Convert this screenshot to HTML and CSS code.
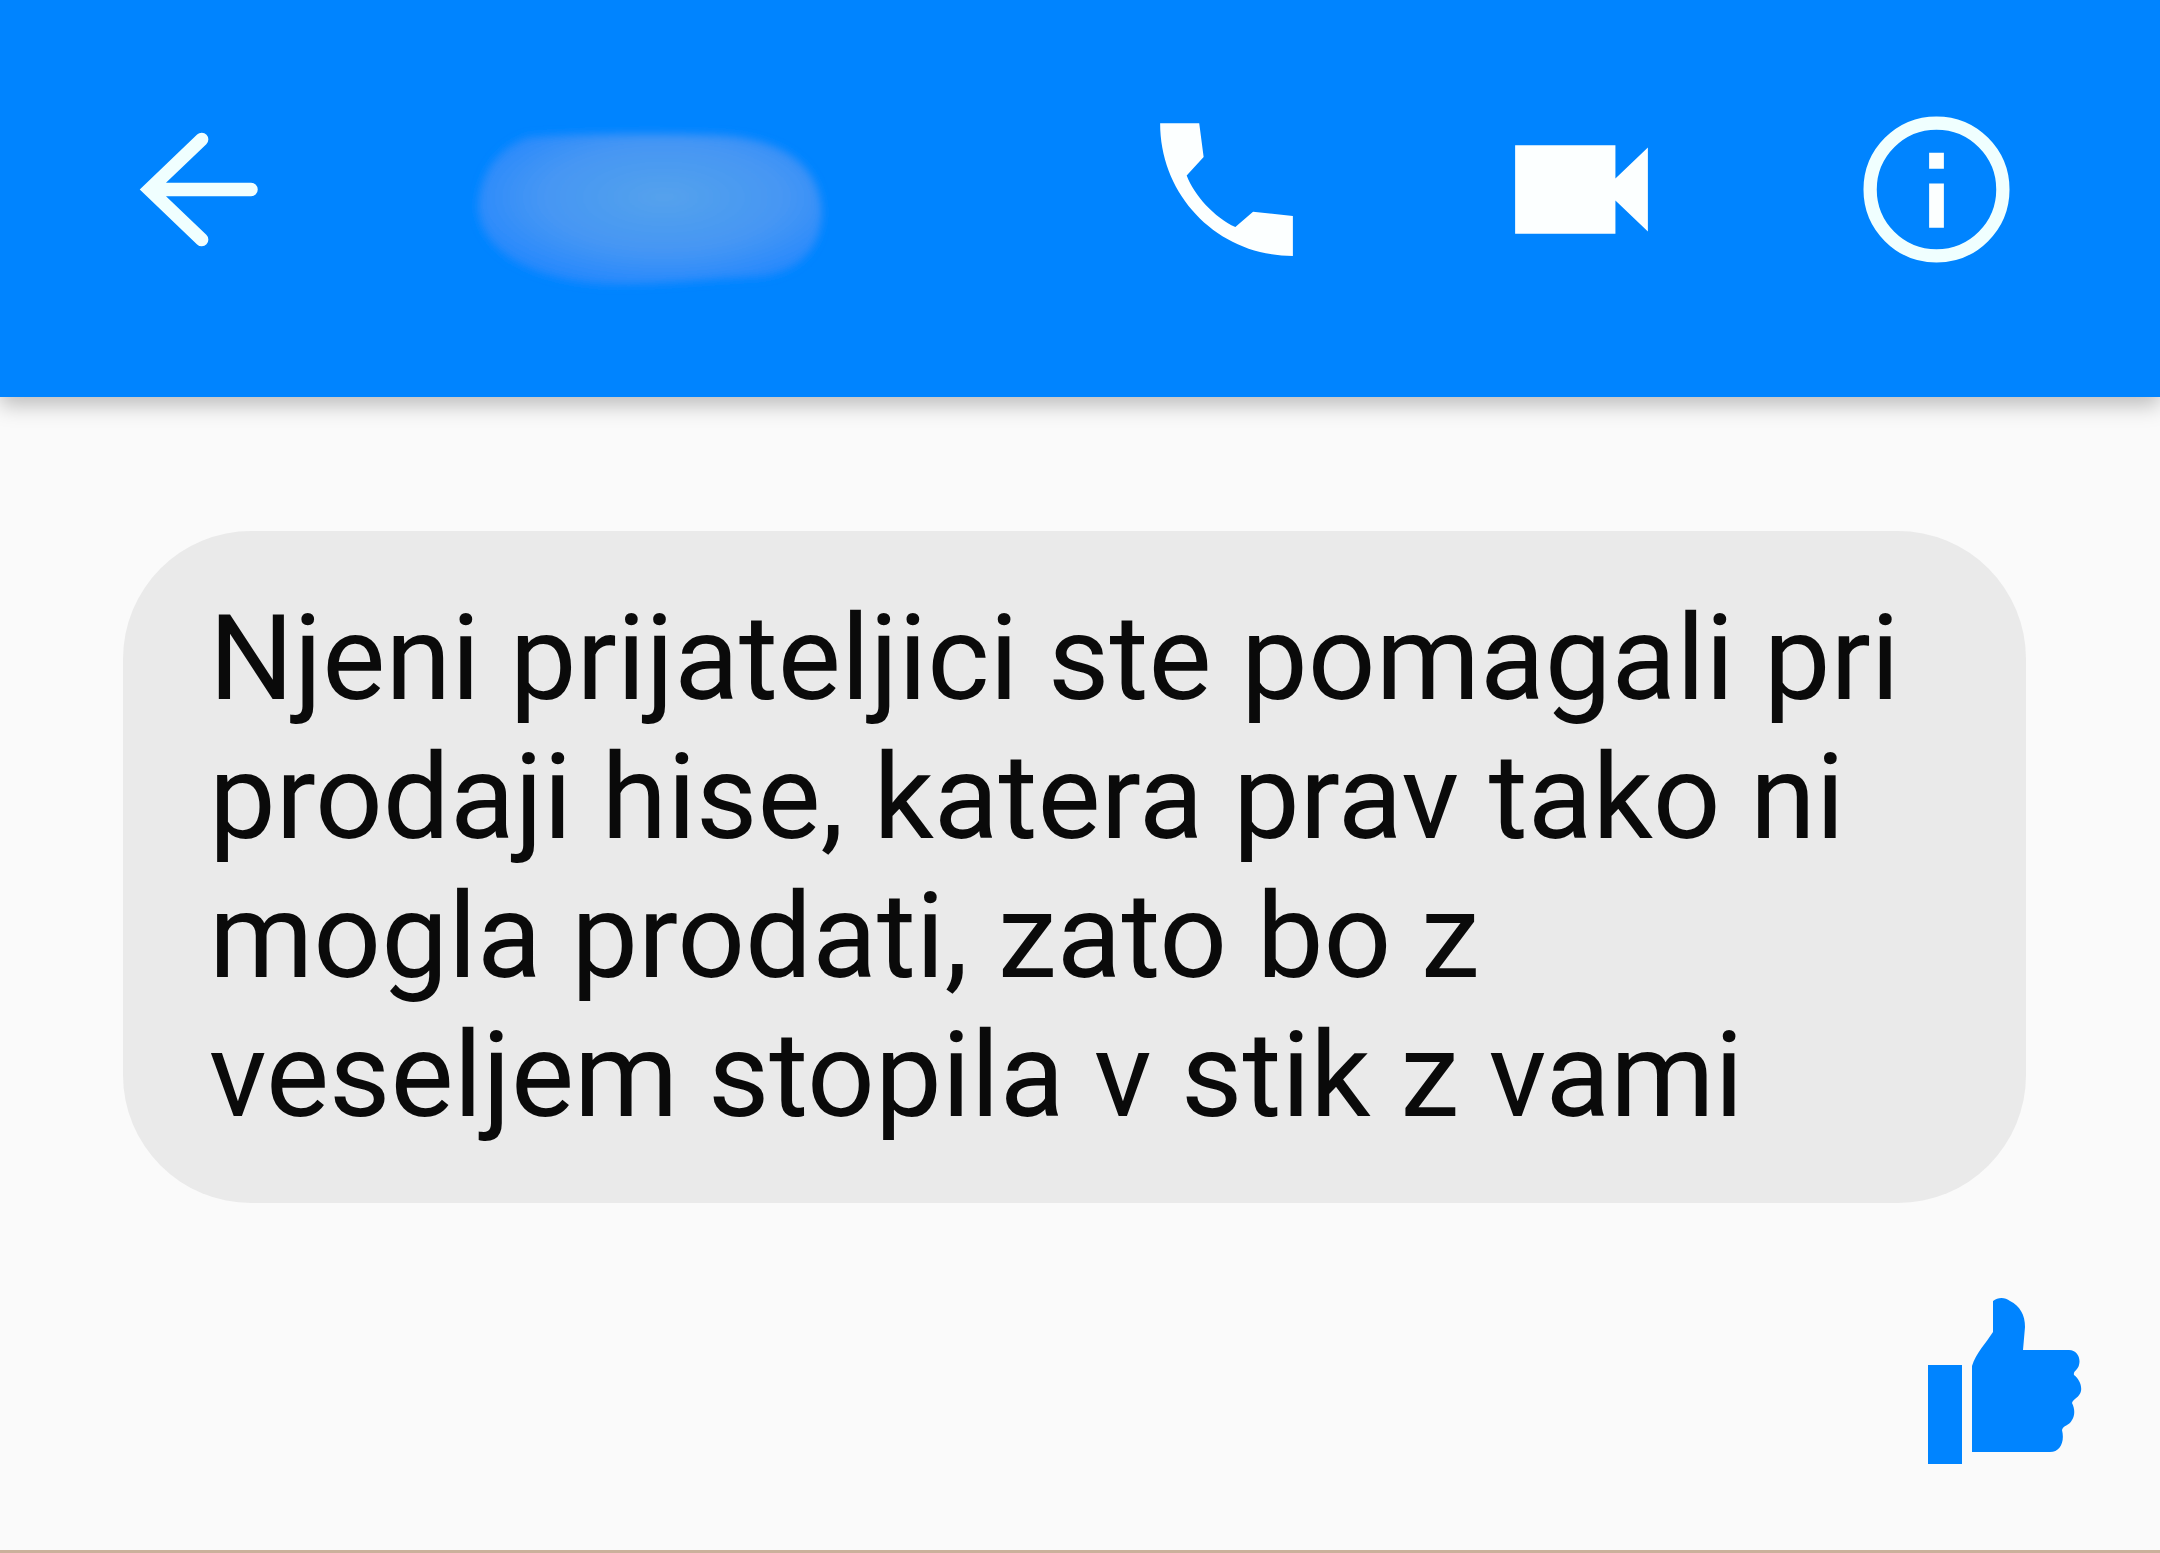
FILE: index.html
```html
<!DOCTYPE html>
<html lang="sl">
<head>
  <meta charset="UTF-8">
  <meta name="viewport" content="width=device-width, initial-scale=1.0">
  <title>Messenger</title>
  <link rel="stylesheet" href="styles.css">
</head>
<body>
  <header class="top-bar">
    <button class="icon-button" type="button" aria-label="Nazaj">
      <svg class="icon" viewBox="0 0 24 24">
        <path class="line" d="M12.3 5.2 L5.2 12 L12.3 18.8 M5.4 12 H19"/>
      </svg>
    </button>
    <!-- blurred contact name -->
    <svg class="contact-name" viewBox="0 0 360 170" aria-hidden="true">
      <defs>
        <radialGradient id="name-fill" cx="0.54" cy="0.42" r="0.6">
          <stop offset="0" stop-color="#55a2ec"/>
          <stop offset="0.6" stop-color="#4596f4"/>
          <stop offset="1" stop-color="#2588fd"/>
        </radialGradient>
        <filter id="name-blur" x="-10%" y="-10%" width="120%" height="120%">
          <feGaussianBlur stdDeviation="4"/>
        </filter>
      </defs>
      <path d="M58 12 C110 8 190 8 250 10 C318 14 350 44 352 86 C352 126 326 148 290 152 C240 154 190 160 140 160 C60 156 10 126 8 82 C10 42 34 20 58 12 Z" fill="url(#name-fill)" filter="url(#name-blur)"/>
    </svg>
    <div class="actions">
      <button class="icon-button" type="button" aria-label="Klic">
        <svg class="icon" viewBox="0 0 24 24">
          <path d="M3 3 H8.3 L8.9 7.6 L6.6 10.1 C7.6 12.8 10.4 15.8 13.2 17.1 L15.6 15 L21 15.6 V21 C11 21 3 13 3 3 Z"/>
        </svg>
      </button>
      <button class="icon-button" type="button" aria-label="Videoklic">
        <svg class="icon" viewBox="0 0 24 24">
          <path d="M3 6 H16.6 V10.5 L21 6.3 V17.7 L16.6 13.5 V18 H3 Z"/>
        </svg>
      </button>
      <button class="icon-button" type="button" aria-label="Informacije">
        <svg class="icon" viewBox="0 0 24 24">
          <circle class="line" cx="12" cy="12" r="9"/>
          <path d="M11 7 H13 V9.2 H11 Z M11 11.2 H13 V17.2 H11 Z"/>
        </svg>
      </button>
    </div>
  </header>

  <main class="chat">
    <p class="message">Njeni prijateljici ste pomagali pri prodaji hise, katera prav tako ni mogla prodati, zato bo z veseljem stopila v stik z vami</p>
    <button class="like-button" type="button" aria-label="Všeč mi je">
      <svg class="like-icon" viewBox="0 0 156 170">
        <path d="M2 68 H36 V167 H2 Z"/>
        <path d="M46 155 V69 C50 56 60 46 67 35 V4 C72 0 79 0 84 4 C94 9 99 18 99 30 L97 53 H143 C151 53 155 61 153 68 C152 73 147 74 148 78 C153 82 156 88 155 94 C154 100 147 102 146 106 C149 112 149 118 146 123 C143 129 137 128 136 133 C139 145 134 155 124 155 Z"/>
      </svg>
    </button>
  </main>
</body>
</html>
```

FILE: styles.css
```css
* {
  box-sizing: border-box;
}

body {
  margin: 0;
  min-height: 100vh;
  display: flex;
  flex-direction: column;
  font-family: Roboto, "Liberation Sans", sans-serif;
  background-color: #fafafa;
  color: #0a0a0a;
  border-bottom: 3px solid #cab09b;
}

.top-bar {
  display: flex;
  align-items: flex-start;
  padding: 101px 135px 102px 111px;
  background-color: #0084ff;
  box-shadow: 0 8px 20px rgba(0, 0, 0, 0.25);
}

.icon-button,
.like-button {
  display: block;
  padding: 0;
  border: none;
  background: none;
  cursor: pointer;
}

.icon {
  display: block;
  width: 177px;
  height: 177px;
  fill: #fcffff;
}

.icon .line {
  fill: none;
  stroke: #f0ffff;
  stroke-width: 1.8;
  stroke-linecap: round;
}

.contact-name {
  width: 360px;
  height: 170px;
  margin: 24px 0 0 182px;
}

.actions {
  display: flex;
  gap: 178px;
  margin-left: auto;
}

.chat {
  flex: 1;
  display: flex;
  flex-direction: column;
  padding: 134px 78px 80px 123px;
}

.message {
  margin: 0 56px 0 0;
  padding: 58px 86px;
  border-radius: 128px;
  background-color: #eaeaea;
  font-size: 119px;
  line-height: 139px;
}

.like-button {
  align-self: flex-end;
  margin-top: 94px;
}

.like-icon {
  display: block;
  width: 156px;
  height: 170px;
  fill: #0084ff;
}
```
